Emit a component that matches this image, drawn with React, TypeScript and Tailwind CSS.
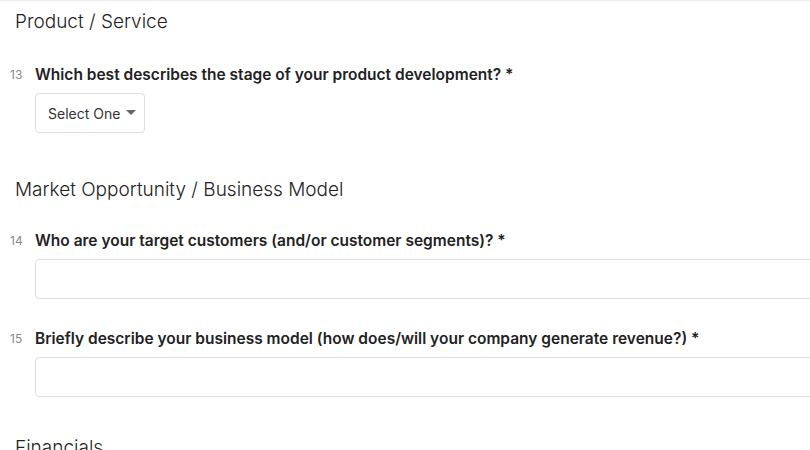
import React from "react";

function Question({ n, text, children }: { n: number; text: string; children: React.ReactNode }) {
  return (
    <div>
      <div className="flex items-center h-5">
        <span className="w-[25px] text-[12px] text-[#888]">{n}</span>
        <span className="text-[15.5px] font-semibold text-[#222] leading-5 whitespace-nowrap">{text}</span>
      </div>
      <div className="pl-[25px] mt-2">{children}</div>
    </div>
  );
}

export default function App() {
  return (
    <div
      className="w-[810px] h-[450px] overflow-hidden bg-white border-t border-[#eeeeee] relative"
      style={{ fontFamily: "Inter, 'Noto Sans', sans-serif" }}
    >
      <div className="pl-[10px]">
        <h2 className="mt-[7px] pl-[5px] text-[19px] leading-7 font-light text-[#222]">Product / Service</h2>
        <div className="mt-[29px]">
          <Question n={13} text="Which best describes the stage of your product development? *">
            <button className="h-10 w-[110px] border border-[#dddddd] rounded-[4px] flex items-center pl-3 gap-[6px] text-[14px] text-[#333] bg-white">
              Select One
              <svg width="10" height="6" viewBox="0 0 10 6">
                <path d="M0 0 L10 0 L5 5 Z" fill="#666" />
              </svg>
            </button>
          </Question>
        </div>
        <h2 className="mt-[43px] pl-[5px] text-[19px] leading-7 font-light text-[#222]">Market Opportunity / Business Model</h2>
        <div className="mt-[27px]">
          <Question n={14} text="Who are your target customers (and/or customer segments)? *">
            <div className="h-10 w-[800px] border border-[#dddddd] rounded-[4px] bg-white" />
          </Question>
        </div>
        <div className="mt-[30px]">
          <Question n={15} text="Briefly describe your business model (how does/will your company generate revenue?) *">
            <div className="h-10 w-[800px] border border-[#dddddd] rounded-[4px] bg-white" />
          </Question>
        </div>
        <h2 className="mt-[37px] pl-[5px] text-[19px] leading-7 font-light text-[#222]">Financials</h2>
      </div>
    </div>
  );
}
